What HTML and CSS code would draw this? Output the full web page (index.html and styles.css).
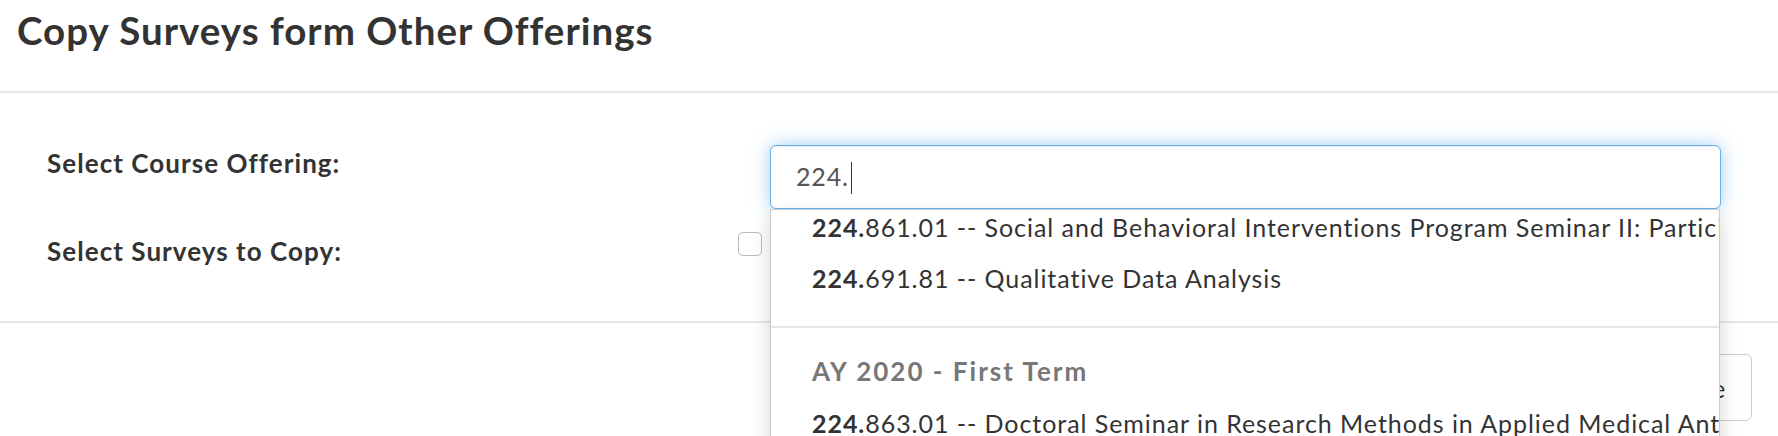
FILE: index.html
```html
<!DOCTYPE html>
<html lang="en">
<head>
<meta charset="utf-8">
<title>Copy Surveys form Other Offerings</title>
<link rel="stylesheet" href="styles.css">
</head>
<body>
<div class="modal">
  <div class="modal-header">
    <h4 class="modal-title">Copy Surveys form Other Offerings</h4>
  </div>
  <div class="modal-body">
    <form class="form">
      <div class="form-row">
        <label class="control-label">Select Course Offering:</label>
        <div class="field">
          <div class="typeahead">
            <div class="input" role="textbox">224.<span class="caret"></span></div>
            <div class="menu">
              <ul class="menu-list">
                <li class="item"><b>224.</b>861.01 -- Social and Behavioral Interventions Program Seminar II: Participatory Research Methods</li>
                <li class="item"><b>224.</b>691.81 -- Qualitative Data Analysis</li>
                <li class="divider"></li>
                <li class="menu-header">AY 2020 - First Term</li>
                <li class="item"><b>224.</b>863.01 -- Doctoral Seminar in Research Methods in Applied Medical Anthropology</li>
                <li class="item"><b>224.</b>860.01 -- Social and Behavioral Interventions Program Seminar I</li>
              </ul>
            </div>
          </div>
        </div>
      </div>
      <div class="form-row">
        <label class="control-label">Select Surveys to Copy:</label>
        <div class="field">
          <label class="check"><span class="box"></span>Mid-term Course Survey</label>
        </div>
      </div>
    </form>
  </div>
  <div class="modal-footer">
    <button class="btn btn-primary" type="button">Copy Surveys</button>
    <button class="btn" type="button">Close</button>
  </div>
</div>
</body>
</html>
```

FILE: styles.css
```css
html, body {
  margin: 0;
  padding: 0;
  height: 436px;
  overflow: hidden;
  background: #fff;
}

body {
  font-family: "Lato", "Liberation Sans", sans-serif;
  color: #333;
}

.modal {
  width: 1778px;
}

.modal-header {
  padding: 8px 17px 38px;
  border-bottom: 2px solid #e5e5e5;
}

.modal-title {
  margin: 0;
  font-size: 38.5px;
  line-height: 45px;
  letter-spacing: 1px;
  font-weight: 700;
  color: #333;
}

.modal-body {
  padding: 52px 0 52px 47px;
}

.form {
  display: flex;
  flex-direction: column;
  gap: 24px;
}

.form-row {
  display: grid;
  grid-template-columns: 723px 951px;
  align-items: start;
}

.control-label {
  font-size: 26px;
  line-height: 36px;
  letter-spacing: 1.05px;
  font-weight: 700;
  color: #333;
}

.field {
  position: relative;
}

.typeahead {
  position: relative;
}

.input {
  box-sizing: border-box;
  height: 64px;
  border: 1px solid #66afe9;
  border-radius: 6px;
  padding: 0 25px;
  font-size: 25px;
  line-height: 60px;
  letter-spacing: 0.85px;
  color: #555;
  background: #fff;
  box-shadow: inset 0 1px 1px rgba(0, 0, 0, 0.075), 0 0 18px rgba(102, 175, 233, 0.6);
}

.caret {
  display: inline-block;
  width: 1px;
  height: 32px;
  background: #333;
  margin-left: 2px;
  vertical-align: -8px;
}

.menu {
  position: absolute;
  top: 100%;
  left: 0;
  z-index: 10;
  box-sizing: border-box;
  width: 950px;
  height: 320px;
  overflow: hidden;
  background: #fff;
  border: 1px solid rgba(0, 0, 0, 0.2);
  box-shadow: 0 9px 18px rgba(0, 0, 0, 0.175);
}

.menu-list {
  list-style: none;
  margin: -8px 0 0;
  padding: 0;
}

.item {
  padding: 0 0 0 41px;
  font-size: 25px;
  line-height: 51px;
  letter-spacing: 0.95px;
  white-space: nowrap;
  overflow: hidden;
  color: #333;
}

.item b {
  font-weight: 700;
}

.divider {
  height: 2px;
  margin: 22px 0 0;
  background: #e5e5e5;
}

.menu-header {
  padding: 25px 0 9px 41px;
  font-size: 26px;
  line-height: 36px;
  letter-spacing: 2px;
  font-weight: 700;
  color: #777;
  white-space: nowrap;
}

.check {
  display: flex;
  align-items: center;
  gap: 14px;
  font-size: 25px;
  line-height: 36px;
  margin-left: -32px;
  margin-top: -1px;
}

.box {
  box-sizing: border-box;
  width: 24px;
  height: 24px;
  border: 1px solid #bbb;
  border-radius: 5px;
  background: #fff;
  align-self: flex-start;
}

.modal-footer {
  display: flex;
  justify-content: flex-end;
  gap: 14px;
  padding: 31px 26px 20px;
  border-top: 2px solid #e5e5e5;
}

.btn {
  box-sizing: border-box;
  height: 67px;
  padding: 0 25px 0 22px;
  font-family: "Lato", "Liberation Sans", sans-serif;
  font-size: 25px;
  letter-spacing: 0.85px;
  color: #333;
  background: #fff;
  border: 1px solid #ccc;
  border-radius: 6px;
}

.btn-primary {
  color: #fff;
  background: #337ab7;
  border-color: #2e6da4;
}
```
